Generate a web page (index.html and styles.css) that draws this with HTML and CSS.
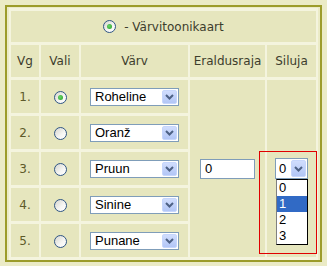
FILE: index.html
```html
<!DOCTYPE html>
<html lang="et">
<head>
  <meta charset="UTF-8">
  <title>Värvitoonikaart</title>
  <link rel="stylesheet" href="styles.css">
</head>
<body>

  <div class="frame">
    <table class="grid">
      <colgroup>
        <col class="c-vg"><col class="c-vali"><col class="c-varv"><col class="c-era"><col class="c-sil">
      </colgroup>
      <tr class="title-row">
        <td colspan="5" class="title"><span class="radio on"></span> - Värvitoonikaart</td>
      </tr>
      <tr class="head-row">
        <th>Vg</th><th>Vali</th><th>Värv</th><th>Eraldusraja</th><th>Siluja</th>
      </tr>
      <tr class="row">
        <td class="num">1.</td>
        <td><span class="radio on"></span></td>
        <td><span class="dd"><span class="dd-text">Roheline</span><span class="dd-btn"><svg width="9" height="6" viewBox="0 0 9 6"><polyline points="1,1 4.5,4.5 8,1" fill="none" stroke="#4d6185" stroke-width="2"/></svg></span></span></td>
        <td rowspan="5" class="era"><input class="field" type="text" value="0"></td>
        <td rowspan="5" class="sil"><span class="dd small"><span class="dd-text">0</span><span class="dd-btn"><svg width="9" height="6" viewBox="0 0 9 6"><polyline points="1,1 4.5,4.5 8,1" fill="none" stroke="#4d6185" stroke-width="2"/></svg></span></span></td>
      </tr>
      <tr class="row">
        <td class="num">2.</td>
        <td><span class="radio"></span></td>
        <td><span class="dd"><span class="dd-text">Oranž</span><span class="dd-btn"><svg width="9" height="6" viewBox="0 0 9 6"><polyline points="1,1 4.5,4.5 8,1" fill="none" stroke="#4d6185" stroke-width="2"/></svg></span></span></td>
      </tr>
      <tr class="row">
        <td class="num">3.</td>
        <td><span class="radio"></span></td>
        <td><span class="dd"><span class="dd-text">Pruun</span><span class="dd-btn"><svg width="9" height="6" viewBox="0 0 9 6"><polyline points="1,1 4.5,4.5 8,1" fill="none" stroke="#4d6185" stroke-width="2"/></svg></span></span></td>
      </tr>
      <tr class="row">
        <td class="num">4.</td>
        <td><span class="radio"></span></td>
        <td><span class="dd"><span class="dd-text">Sinine</span><span class="dd-btn"><svg width="9" height="6" viewBox="0 0 9 6"><polyline points="1,1 4.5,4.5 8,1" fill="none" stroke="#4d6185" stroke-width="2"/></svg></span></span></td>
      </tr>
      <tr class="row">
        <td class="num">5.</td>
        <td><span class="radio"></span></td>
        <td><span class="dd"><span class="dd-text">Punane</span><span class="dd-btn"><svg width="9" height="6" viewBox="0 0 9 6"><polyline points="1,1 4.5,4.5 8,1" fill="none" stroke="#4d6185" stroke-width="2"/></svg></span></span></td>
      </tr>
    </table>

    <div class="focus-box"></div>
    <ul class="dd-list">
      <li>0</li>
      <li class="picked">1</li>
      <li>2</li>
      <li>3</li>
    </ul>
  </div>

</body>
</html>
```

FILE: styles.css
```css
body {
  margin: 0;
  background: #ebebc6;
  font-family: "DejaVu Sans", sans-serif;
  font-size: 12px;
  color: #3d3d2d;
}

.frame {
  position: relative;
  margin: 5px;
  border: 2px solid #9c9c2a;
  padding: 1px 2px 0 2px;
}

.grid {
  width: 309px;
  table-layout: fixed;
  border-collapse: separate;
  border-spacing: 2px 3px;
  background: #f4f4de;
}

.c-vg { width: 28px; }
.c-vali { width: 38px; }
.c-varv { width: 107px; }
.c-era { width: 75px; }
.c-sil { width: 49px; }

.grid td,
.grid th {
  background: #e6e6be;
  padding: 0;
  text-align: center;
  vertical-align: middle;
}

.grid th {
  font-weight: normal;
}

.title-row { height: 31px; }
.head-row { height: 32px; }
.row { height: 33px; }

.title {
  white-space: nowrap;
}

.title .radio {
  vertical-align: -2px;
  margin-right: 4px;
}

.num {
  color: #5e5a2a;
}

.radio {
  display: inline-block;
  position: relative;
  width: 11px;
  height: 11px;
  border: 1px solid #2f5585;
  border-radius: 50%;
  background: linear-gradient(135deg, #d6d5ce, #f6f6f4 60%, #ffffff);
  vertical-align: middle;
}

.radio.on::after {
  content: "";
  position: absolute;
  left: 3px;
  top: 3px;
  width: 5px;
  height: 5px;
  border-radius: 50%;
  background: radial-gradient(circle at 40% 40%, #6ad46a, #21a121);
}

.dd {
  display: inline-flex;
  align-items: center;
  justify-content: space-between;
  box-sizing: border-box;
  width: 89px;
  height: 18px;
  border: 1px solid #7f9db9;
  background: #fff;
  padding: 0 1px 0 4px;
  font-family: "Liberation Sans", Arial, sans-serif;
  font-size: 13px;
  color: #000;
  text-align: left;
  vertical-align: middle;
}

.dd.small {
  width: 33px;
  height: 21px;
  padding-left: 3px;
}

.dd-btn {
  display: flex;
  align-items: center;
  justify-content: center;
  box-sizing: border-box;
  width: 15px;
  height: 14px;
  border: 1px solid #c6d6fc;
  border-radius: 2px;
  background: linear-gradient(#d0ddfd, #b2c6f6);
}

.dd.small .dd-btn {
  height: 17px;
}

.field {
  box-sizing: border-box;
  width: 55px;
  height: 20px;
  border: 1px solid #7f9db9;
  padding: 0 4px;
  font-family: "Liberation Sans", Arial, sans-serif;
  font-size: 13px;
  color: #000;
  vertical-align: middle;
}

.focus-box {
  position: absolute;
  left: 252px;
  top: 144px;
  width: 56px;
  height: 101px;
  border: 1px solid #e00000;
}

.dd-list {
  position: absolute;
  left: 269px;
  top: 172px;
  width: 30px;
  margin: 0;
  padding: 0;
  list-style: none;
  border: 1px solid #000;
  border-left-color: #808080;
  background: #fff;
  font-family: "Liberation Sans", Arial, sans-serif;
  font-size: 13px;
  color: #000;
}

.dd-list li {
  height: 16px;
  line-height: 16px;
  padding-left: 2px;
}

.dd-list .picked {
  background: #316ac5;
  color: #fff;
}
```
